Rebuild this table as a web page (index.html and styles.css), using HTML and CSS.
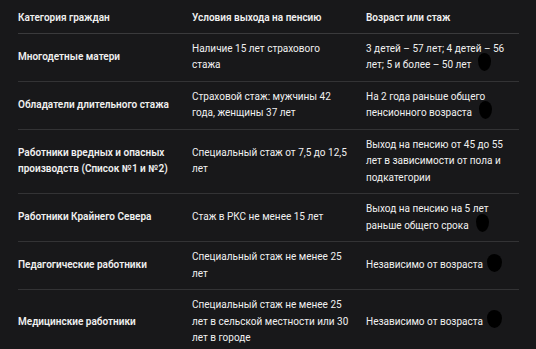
FILE: index.html
```html
<!DOCTYPE html>
<html lang="ru">
<head>
<meta charset="utf-8">
<link rel="stylesheet" href="styles.css">
</head>
<body>
<div class="wrap">
<table class="pension">
<colgroup><col class="c1"><col class="c2"><col class="c3"></colgroup>
<thead>
<tr><th>Категория граждан</th><th>Условия выхода на пенсию</th><th>Возраст или стаж</th></tr>
</thead>
<tbody>
<tr>
<td class="cat">Многодетные матери</td>
<td>Наличие 15 лет страхового<br>стажа</td>
<td>3 детей – 57 лет; 4 детей – 56<br>лет; 5 и более – 50 лет<span class="blob"></span></td>
</tr>
<tr>
<td class="cat">Обладатели длительного стажа</td>
<td>Страховой стаж: мужчины 42<br>года, женщины 37 лет</td>
<td>На 2 года раньше общего<br>пенсионного возраста<span class="blob"></span></td>
</tr>
<tr>
<td class="cat">Работники вредных и опасных<br>производств (Список №1 и №2)</td>
<td>Специальный стаж от 7,5 до 12,5<br>лет</td>
<td>Выход на пенсию от 45 до 55<br>лет в зависимости от пола и<br>подкатегории</td>
</tr>
<tr>
<td class="cat">Работники Крайнего Севера</td>
<td>Стаж в РКС не менее 15 лет</td>
<td>Выход на пенсию на 5 лет<br>раньше общего срока<span class="blob"></span></td>
</tr>
<tr>
<td class="cat">Педагогические работники</td>
<td>Специальный стаж не менее 25<br>лет</td>
<td>Независимо от возраста<span class="blob wide"></span></td>
</tr>
<tr>
<td class="cat">Медицинские работники</td>
<td>Специальный стаж не менее 25<br>лет в сельской местности или 30<br>лет в городе</td>
<td>Независимо от возраста<span class="blob wide"></span></td>
</tr>
</tbody>
</table>
</div>
</body>
</html>
```
FILE: styles.css
```css
html, body {
  margin: 0;
  padding: 0;
  background: #18181a;
}
body {
  font-family: Roboto, "Liberation Sans", sans-serif;
  font-size: 10px;
  line-height: 16.5px;
  color: #f0f0f0;
}
.wrap {
  padding: 0 17px 0 18px;
}
.pension {
  width: 501px;
  border-collapse: collapse;
  table-layout: fixed;
}
.c1 { width: 174px; }
.c2 { width: 174px; }
.c3 { width: 153px; }
.pension th {
  text-align: left;
  font-weight: 600;
  padding: 10px 8px 6px 0;
  border-bottom: 1px solid #3a3a3c;
  white-space: nowrap;
}
.pension td {
  text-align: left;
  vertical-align: middle;
  padding: 7px 8px 7px 0;
  border-bottom: 1px solid #333335;
  white-space: nowrap;
}
.pension td.cat {
  font-weight: 600;
}
.blob {
  display: inline-block;
  width: 13px;
  height: 18px;
  margin: -7px 0 -1px 7px;
  background: #000;
  border-radius: 48% 52% 50% 50% / 42% 45% 55% 58%;
  vertical-align: middle;
}
.blob.wide {
  width: 15px;
  margin-left: 4px;
}
```
